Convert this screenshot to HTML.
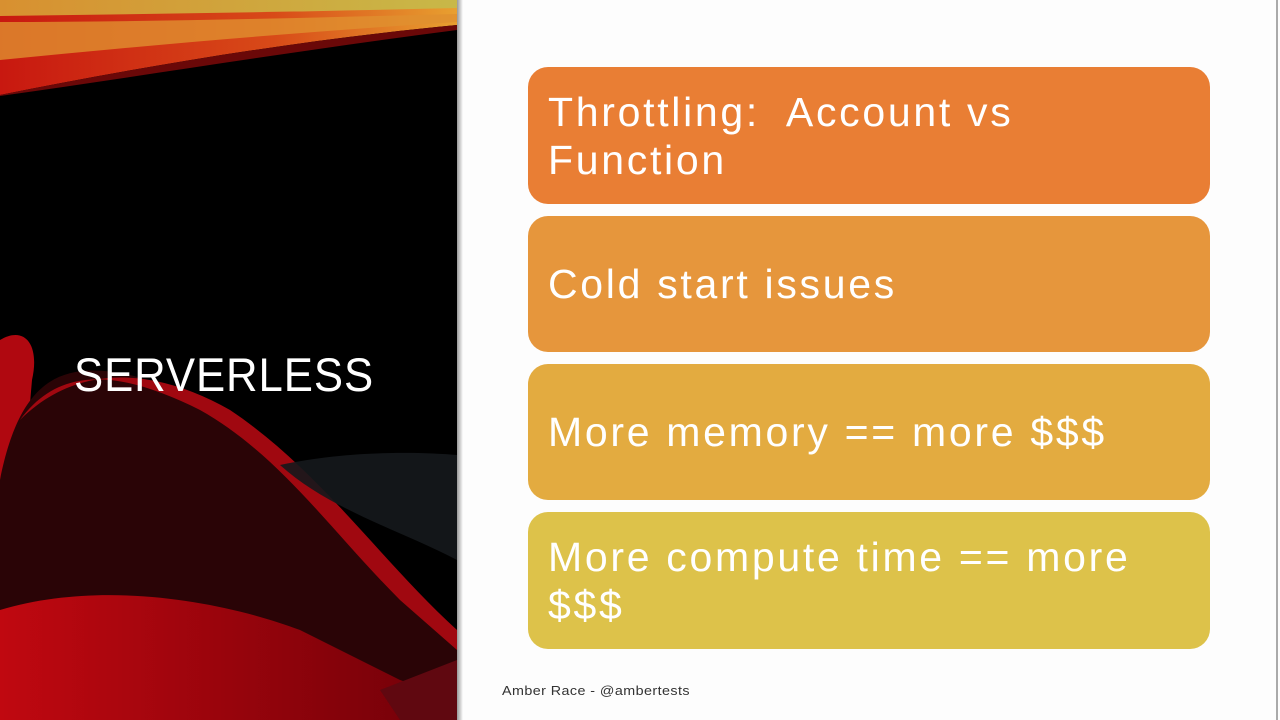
<!DOCTYPE html>
<html><head><meta charset="utf-8"><style>
body{margin:0;width:1280px;height:720px;overflow:hidden;background:#fdfdfd;position:relative;font-family:"Liberation Sans",sans-serif}
#left{position:absolute;left:0;top:0;width:457px;height:720px;background:#000;overflow:hidden}
.shadow{position:absolute;left:457px;top:0;width:6px;height:720px;background:linear-gradient(90deg,#999,#fdfdfd)}
.rline{position:absolute;left:1276px;top:0;width:2px;height:720px;background:#aaa}
.box{position:absolute;left:528px;width:682px;border-radius:20px;color:#fff;font-size:41px;line-height:48px;letter-spacing:2.7px;padding-left:20px;box-sizing:border-box;display:flex;align-items:center}
h1{position:absolute;left:74px;top:347px;margin:0;font-weight:normal;color:#fff;font-size:47px;letter-spacing:1px;transform:scaleX(0.93);transform-origin:left}
.foot{position:absolute;left:502px;top:683px;font-size:13px;color:#333;letter-spacing:0.4px;transform:scaleX(1.1);transform-origin:left}
</style></head><body>
<div id="left">
<svg width="457" height="720" style="position:absolute;left:0;top:0">
<defs>
<linearGradient id="g1" x1="0" y1="0" x2="1" y2="0"><stop offset="0" stop-color="#c81810"/><stop offset="0.6" stop-color="#d84a18"/><stop offset="1" stop-color="#e8a030"/></linearGradient>
<linearGradient id="g2" x1="0" y1="0" x2="1" y2="0"><stop offset="0" stop-color="#d89030"/><stop offset="1" stop-color="#c8b848"/></linearGradient>
<linearGradient id="g3" x1="0" y1="0" x2="1" y2="0"><stop offset="0" stop-color="#c00810"/><stop offset="1" stop-color="#700008"/></linearGradient>
</defs>
<path d="M0 0 H457 V25 C300 40 150 65 0 95 Z" fill="url(#g1)"/>
<path d="M0 0 H457 V8 C300 12 150 14 0 16 Z" fill="url(#g2)"/>
<path d="M0 22 C150 22 300 18 457 14 V22 C300 32 150 45 0 60 Z" fill="#e09030" opacity="0.8"/>
<path d="M0 95 C150 65 300 40 457 25 V30 C300 50 150 75 0 96 Z" fill="#6a0808"/>
<path d="M0 340 C25 325 40 345 32 380 L20 520 H0 Z" fill="#b00810"/>
<path d="M0 480 C20 380 60 360 130 375 C230 400 300 480 380 570 L457 640 V720 H0 Z" fill="#2a0406"/>
<path d="M20 420 C60 365 120 370 200 410 C280 455 330 530 400 600 L457 650 V630 C380 560 320 470 230 410 C160 370 80 360 20 420 Z" fill="#a00810"/>
<path d="M280 465 C350 450 420 452 457 455 V560 C400 530 330 510 280 465 Z" fill="#15181c" opacity="0.9"/>
<path d="M0 610 C100 580 220 600 300 630 L400 680 L457 700 V720 H0 Z" fill="url(#g3)"/>
<path d="M380 690 L457 660 V720 H400 Z" fill="#600810"/>
</svg>
<h1>SERVERLESS</h1>
</div>
<div class="shadow"></div>
<div class="rline"></div>
<div class="box" style="top:67px;height:137px;background:#e97e34">Throttling:&nbsp; Account vs<br>Function</div>
<div class="box" style="top:216px;height:136px;background:#e6963c">Cold start issues</div>
<div class="box" style="top:364px;height:136px;background:#e3ab40">More memory == more $$$</div>
<div class="box" style="top:512px;height:137px;background:#ddc24a">More compute time == more<br>$$$</div>
<div class="foot">Amber Race - @ambertests</div>
</body></html>
